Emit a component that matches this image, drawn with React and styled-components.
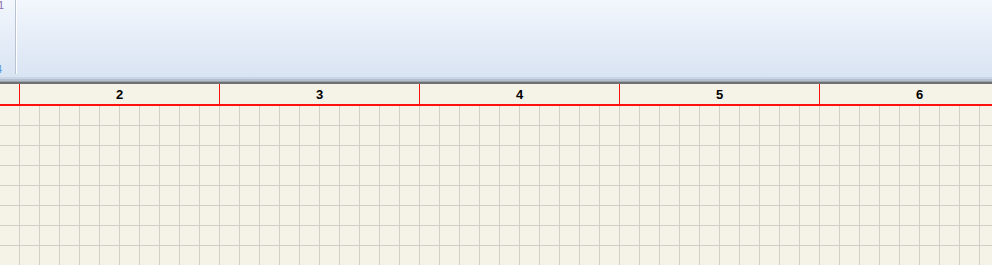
import styled, { createGlobalStyle } from "styled-components";

const GlobalStyle = createGlobalStyle`
  *, *::before, *::after {
    box-sizing: border-box;
  }
  html, body {
    margin: 0;
    padding: 0;
    height: 100%;
    overflow: hidden;
  }
  #root {
    height: 100%;
  }
`;

const Window = styled.div`
  display: flex;
  flex-direction: column;
  width: 992px;
  height: 265px;
  overflow: hidden;
  font-family: "Liberation Sans", Arial, sans-serif;
`;

const Toolbar = styled.div`
  display: flex;
  height: 77px;
  background: linear-gradient(to bottom, #f3f7fd 0%, #e4ecf7 55%, #d9e4f3 100%);
`;

const Gutter = styled.div`
  width: 15px;
  height: 75px;
  display: flex;
  flex-direction: column;
  justify-content: space-between;
  overflow: hidden;
  font-size: 11px;
  line-height: 11px;
`;

const GutterNum = styled.span`
  margin-left: ${(p) => p.$shift}px;
  color: ${(p) => p.$color};
`;

const Separator = styled.div`
  width: 2px;
  height: 74px;
  background: #b9c2cf;
  border-right: 1px solid #ffffff;
`;

const Band = styled.div`
  height: 7px;
  background: linear-gradient(
    to bottom,
    #cad6e6 0px,
    #cad6e6 2px,
    #b3bfcf 2px,
    #b3bfcf 4px,
    #9aa1ab 4px,
    #9aa1ab 5px,
    #6f7073 5px,
    #6f7073 7px
  );
`;

const Header = styled.div`
  display: flex;
  height: 20px;
  background: #f5f2e8;
`;

const HeaderCell = styled.div`
  flex: 0 0 ${(p) => p.$width}px;
  display: flex;
  align-items: center;
  justify-content: center;
  padding-top: 1px;
  border-left: ${(p) => (p.$first ? "none" : "1px solid #ff1010")};
  font-size: 13px;
  font-weight: bold;
  color: #000;
`;

const RedRule = styled.div`
  height: 2px;
  background: #ff1010;
`;

const Grid = styled.div`
  flex: 1;
  background-color: #f5f2e8;
  background-image: linear-gradient(to right, #d3cfc8 1px, transparent 1px),
    linear-gradient(to bottom, #d3cfc8 1px, transparent 1px);
  background-size: 20px 20px;
  background-position: 19px 19px;
`;

const columns = [2, 3, 4, 5, 6];

export default function App() {
  return (
    <>
      <GlobalStyle />
      <Window>
        <Toolbar>
          <Gutter>
            <GutterNum $shift={-2} $color="#8a6fb0">1</GutterNum>
            <GutterNum $shift={-4} $color="#5b9ad8">4</GutterNum>
          </Gutter>
          <Separator />
        </Toolbar>
        <Band />
        <Header>
          <HeaderCell $width={19} $first />
          {columns.map((n) => (
            <HeaderCell key={n} $width={200}>
              {n}
            </HeaderCell>
          ))}
        </Header>
        <RedRule />
        <Grid />
      </Window>
    </>
  );
}
